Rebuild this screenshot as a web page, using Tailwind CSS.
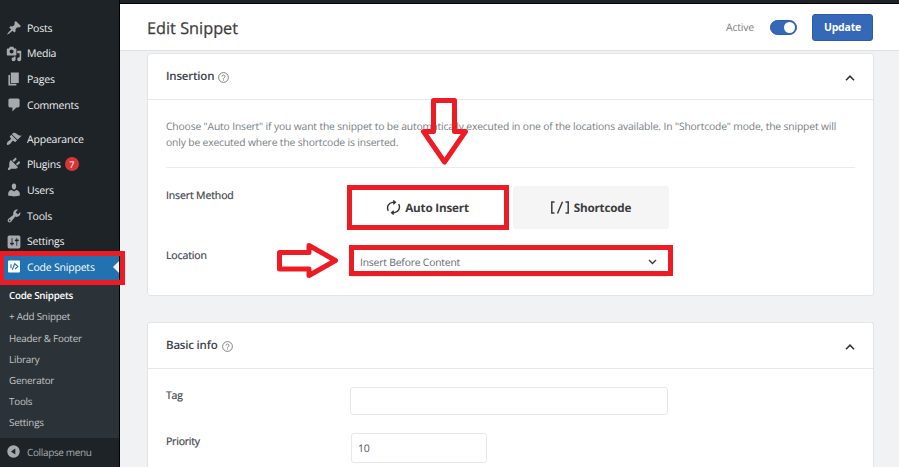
<!DOCTYPE html>
<html lang="en">
<head>
<meta charset="utf-8">
<title>Edit Snippet</title>
<script src="https://cdn.jsdelivr.net/npm/@tailwindcss/browser@4"></script>
</head>
<body class="w-[899px] h-[467px] overflow-hidden relative flex bg-[#f1f2f4] font-['Open_Sans','Noto_Sans',sans-serif] text-[10.5px] tracking-[-0.2px] text-[#3c434a] [text-rendering:geometricPrecision]">

<aside class="w-[120px] h-[467px] overflow-hidden shrink-0 bg-[#1d2327] border-r border-black pt-[15px] text-[#f0f0f1] leading-none">
  <nav class="[&>a]:flex [&>a]:items-center [&>a]:h-[25.7px] [&>a]:pl-[6px] [&_svg]:size-[16px] [&_svg]:shrink-0 [&_svg]:fill-[#a7aaad] [&_span]:ml-[5px] [&_span]:pt-[2px]">
    <a><svg viewBox="0 0 20 20"><path d="M10.44 3.02l1.82-1.82 6.36 6.35-1.83 1.82c-1.05-.68-2.48-.57-3.41.36l-.75.75c-.92.93-1.04 2.35-.35 3.41l-1.83 1.82-2.41-2.41-2.8 2.79c-.42.42-3.38 2.71-3.8 2.29s1.86-3.39 2.28-3.81l2.79-2.79L4.1 9.36l1.83-1.82c1.05.69 2.48.57 3.4-.36l.75-.75c.93-.92 1.05-2.35.36-3.41z"/></svg><span>Posts</span></a>
    <a><svg viewBox="0 0 20 20"><path d="M13 11V4c0-.55-.45-1-1-1h-1.67L9 1H5L3.67 3H2c-.55 0-1 .45-1 1v7c0 .55.45 1 1 1h10c.55 0 1-.45 1-1zM7 4.5c1.38 0 2.5 1.12 2.5 2.5S8.38 9.5 7 9.5 4.5 8.38 4.5 7 5.62 4.5 7 4.5zM14 6h5v10.5c0 1.38-1.12 2.5-2.5 2.5S14 17.88 14 16.5s1.12-2.5 2.5-2.5c.17 0 .34.02.5.05V9h-3V6zm-4 8.05V13h2v3.5c0 1.38-1.12 2.5-2.5 2.5S7 17.88 7 16.5 8.12 14 9.5 14c.17 0 .34.02.5.05z"/></svg><span>Media</span></a>
    <a><svg viewBox="0 0 20 20"><path d="M6 15V2h10v13H6zm-1 1h8v2H3V5h2v11z"/></svg><span>Pages</span></a>
    <a><svg viewBox="0 0 20 20"><path d="M5 2h10c1.1 0 2 .9 2 2v7c0 1.1-.9 2-2 2h-2l-5 5v-5H5c-1.1 0-2-.9-2-2V4c0-1.1.9-2 2-2z"/></svg><span>Comments</span></a>
    <div class="h-[8.2px]"></div>
    <a><svg viewBox="0 0 20 20"><path d="M14.48 11.06L7.41 3.99l1.5-1.5c.5-.56 2.3-.47 3.51.32 1.21.8 1.43 1.28 2.91 2.1 1.18.64 2.45 1.26 4.45.85zm-.71.71L6.7 4.7 4.93 6.47c-.39.39-.39 1.02 0 1.41l1.06 1.06c.39.39.39 1.03 0 1.42-.6.6-1.43 1.11-2.21 1.69-.35.26-.7.53-1.01.84C1.43 14.23.4 16.08 1.4 17.07c.99 1 2.84-.03 4.18-1.36.31-.31.58-.66.85-1.02.57-.78 1.08-1.61 1.69-2.21.39-.39 1.02-.39 1.41 0l1.06 1.06c.39.39 1.02.39 1.41 0z"/></svg><span>Appearance</span></a>
    <a><svg viewBox="0 0 20 20"><path d="M13.11 4.36L9.87 7.6 8 5.73l3.24-3.24c.35-.34 1.05-.2 1.56.32.52.51.66 1.21.31 1.55zm-8 1.77l.91-1.12 9.01 9.01-1.19.84c-.71.71-2.63 1.16-3.82 1.16H6.14L4.9 17.26c-.59.59-1.54.59-2.12 0-.59-.58-.59-1.53 0-2.12l1.24-1.24v-3.88c0-1.13.4-3.19 1.09-3.89zm7.26 3.97l3.24-3.24c.34-.35 1.04-.21 1.55.31.52.51.66 1.21.31 1.55l-3.24 3.25z"/></svg><span>Plugins</span><b class="ml-[4px] size-[14px] rounded-full bg-[#d63638] text-white text-[9px] font-normal flex items-center justify-center">7</b></a>
    <a><svg viewBox="0 0 20 20"><path d="M10 9.25c-2.27 0-2.73-3.44-2.73-3.44C7 4.02 7.82 2 9.97 2c2.16 0 2.98 2.02 2.71 3.81 0 0-.41 3.44-2.68 3.44zm0 2.57L12.72 10c2.39 0 4.52 2.33 4.52 4.53v2.49s-3.65 1.13-7.24 1.13c-3.65 0-7.24-1.13-7.24-1.13v-2.49c0-2.25 1.94-4.48 4.47-4.48z"/></svg><span>Users</span></a>
    <a><svg viewBox="0 0 20 20"><path d="M16.68 9.77c-1.34 1.34-3.3 1.67-4.95.99l-5.41 6.52c-.99.99-2.59.99-3.58 0s-.99-2.59 0-3.57l6.52-5.42c-.68-1.65-.35-3.61.99-4.95 1.28-1.28 3.12-1.62 4.72-1.06l-2.89 2.89 2.82 2.82 2.86-2.87c.53 1.58.18 3.39-1.08 4.65zM3.81 16.21c.4.39 1.04.39 1.43 0 .4-.4.4-1.04 0-1.43-.39-.4-1.03-.4-1.43 0-.39.39-.39 1.03 0 1.43z"/></svg><span>Tools</span></a>
    <a><svg viewBox="0 0 20 20"><path d="M18 16V4c0-1.1-.9-2-2-2H4c-1.1 0-2 .9-2 2v12c0 1.1.9 2 2 2h12c1.1 0 2-.9 2-2zM8 11h1c.55 0 1 .45 1 1s-.45 1-1 1H8v1.5c0 .28-.22.5-.5.5s-.5-.22-.5-.5V13H6c-.55 0-1-.45-1-1s.45-1 1-1h1V5.5c0-.28.22-.5.5-.5s.5.22.5.5V11zm5-2h-1c-.55 0-1-.45-1-1s.45-1 1-1h1V5.5c0-.28.22-.5.5-.5s.5.22.5.5V7h1c.55 0 1 .45 1 1s-.45 1-1 1h-1v5.5c0 .28-.22.5-.5.5s-.5-.22-.5-.5V9z"/></svg><span>Settings</span></a>
    <a class="bg-[#2271b1] text-white relative"><svg viewBox="0 0 16 16"><rect x="2" y="1.500" width="12" height="12" rx="1" fill="#fff"/><path d="M5 5.200v4M8.900 4.200l-2.600 6.600M9.200 5l2.600 2.500-2.600 2.500" fill="none" stroke="#2271b1" stroke-width="1.100"/></svg><span>Code Snippets</span><i class="absolute right-0 top-[7px] border-y-[6px] border-y-transparent border-r-[6px] border-r-[#f0f0f1]"></i></a>
  </nav>
  <div class="bg-[#2c3338] h-[158px] pt-[5.5px] pl-[9px] text-[#c3c4c7] text-[9.8px] [&>p]:h-[21.2px] [&>p]:flex [&>p]:items-center">
    <p class="font-semibold text-white tracking-[-0.25px]">Code Snippets</p>
    <p>+ Add Snippet</p>
    <p>Header &amp; Footer</p>
    <p>Library</p>
    <p>Generator</p>
    <p>Tools</p>
    <p>Settings</p>
  </div>
  <div class="flex items-center h-[27px] pl-[7px] text-[#a7aaad] text-[10px]">
    <svg class="size-[13px]" viewBox="0 0 13 13"><circle cx="6.500" cy="6.500" r="6.200" fill="#a7aaad"/><path d="M8.300 3.500v6L4 6.500z" fill="#1d2327"/></svg>
    <span class="ml-[7px] tracking-[-0.35px]">Collapse menu</span>
  </div>
</aside>

<main class="w-[779px] h-[467px] flex flex-col overflow-hidden">
  <div class="h-[4px] shrink-0 bg-[#1d2327] border-b border-black"></div>
  <header class="h-[47px] shrink-0 bg-white border-b border-[#dfe0e2] flex items-center pl-[27px] pr-[26px]">
    <h1 class="pt-[2px] text-[16.3px] tracking-normal text-[#3c3c3c] leading-none [-webkit-text-stroke:0.25px_#3c3c3c]">Edit Snippet</h1>
    <span class="ml-auto pt-[3px] text-[#808080]">Active</span>
    <span class="ml-[16px] w-[27px] h-[15px] rounded-full bg-[#3568b7] border border-[#2a5cae] flex items-center justify-end pr-[1px]"><i class="size-[11px] rounded-full bg-white"></i></span>
    <button class="ml-[15px] w-[61px] h-[27px] pt-[2px] rounded-[3px] bg-[#3568b7] border border-[#2a5cae] text-white font-bold text-[10.5px]">Update</button>
  </header>

  <div class="pl-[27px] pt-[2px]">
    <section class="w-[727px] h-[243px] bg-white border border-[#e3e4e6] rounded-[3px]">
      <div class="h-[46px] border-b border-[#e6e7e9] flex items-center pl-[18px] pr-[18px]">
        <h2 class="pt-[1px] font-semibold text-[11.5px]">Insertion</h2>
        <svg class="ml-[4px] mt-[1px] size-[11px]" viewBox="0 0 11 11" fill="none" stroke="#6f7479"><circle cx="5.500" cy="5.500" r="4.900" stroke-width=".9"/><path d="M4 4.500a1.500 1.400 0 1 1 2.300 1.150q-.8.400-.8 1.050M5.500 7.500v1" stroke-width=".9"/></svg>
        <svg class="ml-auto w-[10px] h-[6px] mt-[2px]" viewBox="0 0 10 6" fill="none" stroke="#333" stroke-width="1.600"><path d="M1 5.200l4-4 4 4"/></svg>
      </div>
      <div class="px-[18px]">
        <p class="pt-[19px] h-[68px] text-[#777d82] text-[10.3px] tracking-[-0.14px] leading-[16px] border-b border-[#ebebec] whitespace-nowrap">Choose "Auto Insert" if you want the snippet to be automatically executed in one of the locations available. In "Shortcode" mode, the snippet will<br>only be executed where the shortcode is inserted.</p>
        <div class="flex pt-[18px]">
          <label class="w-[184px] pt-[3px] tracking-[-0.13px] [-webkit-text-stroke:0.2px_#3c434a]">Insert Method</label>
          <div class="flex h-[43px] text-[11.7px] font-bold text-[#3c3c3c]">
            <div class="w-[157px] flex items-center justify-center pr-[2px]"><svg class="size-[15px] mr-[4px]" viewBox="0 0 16 16" fill="none" stroke="#333" stroke-width="1.500"><path d="M2.500 11.500A6 6 0 0 1 7 2.500h3M7.700.5l2.300 2-2.300 2M13.500 4.500A6 6 0 0 1 9 13.500H6M8.300 15.500l-2.300-2 2.300-2"/></svg><span class="pt-[3px]">Auto Insert</span></div>
            <div class="ml-[6px] w-[156px] rounded-[3px] bg-[#f5f5f5] flex items-center justify-center pr-[1px]"><svg class="w-[20px] h-[14px] mr-[4px]" viewBox="0 0 20 14" fill="none" stroke="#3c3c3c" stroke-width="1.500"><path d="M4.500 1H1.800v11h2.700M12.500.8L7.500 12.500M15.500 1h2.700v11h-2.700"/></svg><span class="pt-[3px]">Shortcode</span></div>
          </div>
        </div>
        <div class="flex pt-[17px]">
          <label class="w-[184px] pt-[3px] tracking-[-0.13px] [-webkit-text-stroke:0.2px_#3c434a]">Location</label>
          <div class="w-[319px] h-[31px] border border-[#e6e7e9] rounded-[3px] flex items-center pt-[1px] pl-[9px] pr-[11px] text-[#646970] text-[10.3px]"><span class="pt-[3px] tracking-[-0.17px]">Insert Before Content</span><svg class="ml-auto w-[9px] h-[6px]" viewBox="0 0 9 6" fill="none" stroke="#3c3c3c" stroke-width="1.400"><path d="M1 1l3.500 3.500L8 1"/></svg></div>
        </div>
      </div>
    </section>

    <section class="mt-[26px] w-[727px] h-[145px] bg-white border border-b-0 border-[#e3e4e6] rounded-t-[3px]">
      <div class="h-[46px] border-b border-[#e6e7e9] flex items-center pl-[18px] pr-[18px]">
        <h2 class="pt-[1px] font-semibold text-[11.5px]">Basic info</h2>
        <svg class="ml-[5px] mt-[1px] size-[11px]" viewBox="0 0 11 11" fill="none" stroke="#6f7479"><circle cx="5.500" cy="5.500" r="4.900" stroke-width=".9"/><path d="M4 4.500a1.500 1.400 0 1 1 2.300 1.150q-.8.400-.8 1.050M5.500 7.500v1" stroke-width=".9"/></svg>
        <svg class="ml-auto w-[10px] h-[6px] mt-[2px]" viewBox="0 0 10 6" fill="none" stroke="#333" stroke-width="1.600"><path d="M1 5.200l4-4 4 4"/></svg>
      </div>
      <div class="px-[18px] pt-[18px]">
        <div class="flex"><label class="w-[184px] pt-[2px] [-webkit-text-stroke:0.2px_#3c434a]">Tag</label><div class="w-[318px] h-[28px] border border-[#e6e7e9] rounded-[3px]"></div></div>
        <div class="flex mt-[18px]"><label class="w-[184px] pt-[2px] [-webkit-text-stroke:0.2px_#3c434a]">Priority</label><div class="w-[136px] h-[30px] ml-[1px] border border-[#e6e7e9] rounded-[3px] flex items-center pl-[6px] pt-[3px] text-[#50575e]">10</div></div>
      </div>
    </section>
  </div>
</main>

<!-- callout annotations -->
<div class="absolute left-[-1px] top-[251px] w-[126px] h-[34px] border-[5px] border-[#ed1c24]"></div>
<div class="absolute left-[347px] top-[185px] w-[162px] h-[45px] border-[5px] border-[#ed1c24]"></div>
<div class="absolute left-[349px] top-[245px] w-[324px] h-[31px] border-[5px] border-[#ed1c24]"></div>
<svg class="absolute left-0 top-0" width="899" height="467" fill="none" stroke="#ed1c24" stroke-width="5" stroke-linejoin="round"><path d="M433.500 100.500h21v31h11L444.500 162 423.500 131.500h10z"/><path d="M279.500 252.500v16.500h29.500v6.500L335.500 260.500 309 245.500v7z"/></svg>
</body>
</html>
